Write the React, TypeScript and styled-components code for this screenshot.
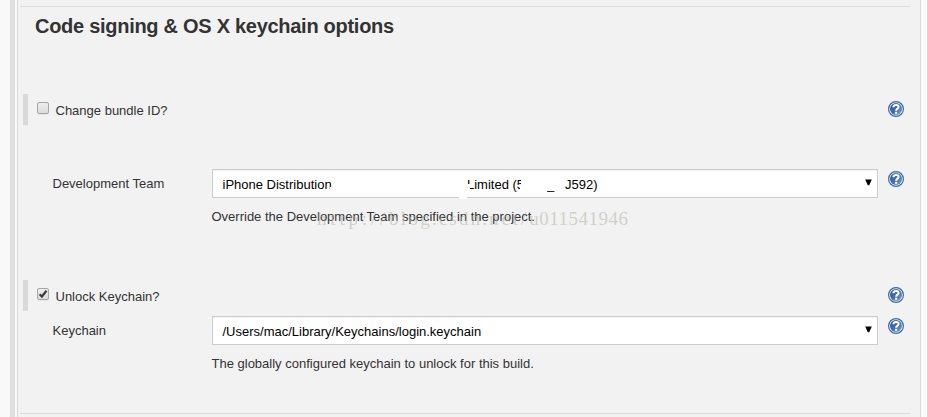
import React from "react";
import styled, { createGlobalStyle } from "styled-components";

const Global = createGlobalStyle`
  * { box-sizing: border-box; }
  body { margin: 0; background: #f9f9f9; overflow: hidden; }
`;

const Page = styled.div`
  position: relative;
  display: flex;
  width: 927px;
  height: 417px;
  padding-left: 10px;
  overflow: hidden;
  background: #f9f9f9;
  font: 13px/18px "Liberation Sans", Arial, sans-serif;
  color: #333;
`;

const Rail = styled.div`
  width: 5px;
  margin-right: 2px;
  background: #dfdfdf;
`;

const Panel = styled.main`
  display: flex;
  flex-direction: column;
  width: 904px;
  padding: 6px 10px 0 2px;
  border: solid #d9d9d9;
  border-width: 0 1px;
  background: #f2f2f2;
`;

const Divider = styled.hr`
  width: 100%;
  height: 1px;
  margin: 0;
  border: 0;
  background: #dcdcdc;
`;

const Heading = styled.h1`
  height: 38px;
  margin: 0 0 49px 15px;
  font-size: 20px;
  line-height: 38px;
  font-weight: bold;
  letter-spacing: -0.28px;
  white-space: nowrap;
`;

const OptionRow = styled.div<{ $after: number }>`
  display: flex;
  align-items: flex-start;
  height: 31px;
  margin: 0 6px ${(p) => p.$after}px 3px;
  padding: 7px 0 0 9px;
  border-left: 5px solid #dadada;
`;

const OptionLabel = styled.label`
  flex: 1;
  margin-left: 6.5px;
  padding-top: 1px;
`;

const CheckBox = styled.span`
  display: block;
  width: 12px;
  height: 12px;
  margin-top: 1px;
  border: 1px solid #a6a6a6;
  border-radius: 2px;
  background: linear-gradient(#ededed, #dcdcdc);
  box-shadow: 0 1px 0 #e4e4e4;
  svg { display: block; }
`;

const FieldRow = styled.div<{ $after: number }>`
  display: grid;
  grid-template-columns: 159px 666px 16px;
  margin: 0 5px ${(p) => p.$after}px 33px;
`;

const FieldLabel = styled.div`
  padding-top: 6px;
  margin-left: -0.5px;
`;

const SelectBox = styled.div`
  position: relative;
  display: flex;
  align-items: center;
  height: 29px;
  padding: 2px 5px 0 9.5px;
  border: 1px solid #ccc;
  background: #fff;
  box-shadow: inset 0 1px 1px rgba(0, 0, 0, 0.06);
  color: #000;
  white-space: pre;
`;

const Arrow = styled.svg`
  display: block;
  margin: -4px 0 0 auto;
`;

const Clip = styled.span<{ $width: number; $gap?: number }>`
  width: ${(p) => p.$width}px;
  margin-right: ${(p) => p.$gap ?? 0}px;
  overflow: hidden;
`;

const Patch = styled.span<{ $x: number; $y: number; $w: number; $h: number }>`
  position: absolute;
  left: ${(p) => p.$x}px;
  top: ${(p) => p.$y}px;
  width: ${(p) => p.$w}px;
  height: ${(p) => p.$h}px;
  background: #fff;
`;

const HelpSlot = styled.div`
  padding-top: 2px;
  margin-left: 10px;
`;

const Description = styled.div`
  grid-column: 2;
  margin: 10px 0 0 -0.5px;
`;

const Watermark = styled.div`
  position: absolute;
  left: 317px;
  top: 207px;
  font: 19px/24px "Liberation Serif", serif;
  color: rgba(178, 178, 168, 0.55);
  white-space: nowrap;
`;

const Run = styled.span<{ $space: number }>`
  letter-spacing: ${(p) => p.$space}px;
`;

const HelpSvg = styled.svg`
  display: block;
  flex: none;
`;

const Help = () => (
  <HelpSvg width="16" height="16" viewBox="0 0 16 16" role="img" aria-label="Help">
    <defs>
      <linearGradient id="helpFill" x1="0" y1="0" x2="1" y2="1">
        <stop offset="0" stopColor="#2c5590" />
        <stop offset="0.5" stopColor="#416da9" />
        <stop offset="1" stopColor="#82a6d3" />
      </linearGradient>
    </defs>
    <circle cx="8" cy="8" r="7.4" fill="#f0f5fb" stroke="#3e689f" strokeWidth="1.2" />
    <circle cx="8" cy="8" r="6" fill="url(#helpFill)" />
    <path d="M5.4 6.2C5.4 3.2 10.6 3.1 10.6 6C10.6 7.7 8.1 7.6 8.1 9.8" fill="none" stroke="#fff" strokeWidth="2" />
    <rect x="7.1" y="10.8" width="2" height="2" fill="#fff" />
  </HelpSvg>
);

const Down = () => (
  <Arrow width="7" height="7" viewBox="0 0 7 7">
    <path d="M0.2 0.6H6.8L4.2 6.2H2.8Z" fill="#000" />
  </Arrow>
);

const Check = ({ checked = false }: { checked?: boolean }) => (
  <CheckBox role="checkbox" aria-checked={checked}>
    {checked && (
      <svg width="10" height="10" viewBox="0 0 10 10">
        <path d="M1.6 5.2L3.9 7.5L8.5 1.7" fill="none" stroke="#3b3b3b" strokeWidth="2.2" />
      </svg>
    )}
  </CheckBox>
);

export default function App() {
  return (
    <>
      <Global />
      <Page>
        <Rail />
        <Panel>
          <Divider />
          <Heading>Code signing &amp; OS X keychain options</Heading>
          <OptionRow $after={44}>
            <Check />
            <OptionLabel>Change bundle ID?</OptionLabel>
            <Help />
          </OptionRow>
          <FieldRow $after={54}>
            <FieldLabel>Development Team</FieldLabel>
            <SelectBox>
              <Clip $width={109} $gap={135.5}>iPhone Distribution.</Clip>
              <Clip $width={54} $gap={26}>Limited (5</Clip>
              <Clip $width={8} $gap={10}>_</Clip>
              <span>J592)</span>
              <Patch $x={117} $y={17} $w={2} $h={3} />
              <Patch $x={254} $y={14} $w={4} $h={3} />
              <Patch $x={255} $y={17} $w={2} $h={2} />
              <Patch $x={307} $y={16} $w={5} $h={6} />
              <Patch $x={246} $y={27} $w={8} $h={2} />
              <Down />
            </SelectBox>
            <HelpSlot><Help /></HelpSlot>
            <Description>Override the Development Team specified in the project.</Description>
          </FieldRow>
          <OptionRow $after={5}>
            <Check checked />
            <OptionLabel>Unlock Keychain?</OptionLabel>
            <Help />
          </OptionRow>
          <FieldRow $after={40}>
            <FieldLabel>Keychain</FieldLabel>
            <SelectBox>
              <span>/Users/mac/Library/Keychains/login.keychain</span>
              <Down />
            </SelectBox>
            <HelpSlot><Help /></HelpSlot>
            <Description>The globally configured keychain to unlock for this build.</Description>
          </FieldRow>
          <Divider />
        </Panel>
        <Watermark>
          <Run $space={3.8}>http://</Run>
          <Run $space={2.3}>blog.</Run>
          <Run $space={2.1}>csdn.</Run>
          <Run $space={2.9}>net/</Run>
          <Run $space={0.5}>u011541946</Run>
        </Watermark>
      </Page>
    </>
  );
}
